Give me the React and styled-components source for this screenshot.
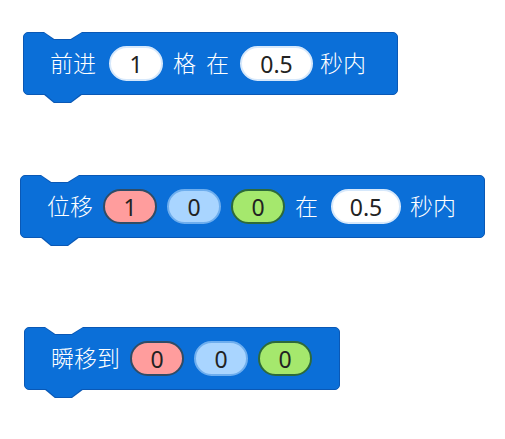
import React from 'react';
import styled, {createGlobalStyle} from 'styled-components';

const GlobalStyle = createGlobalStyle`
    html, body {
        margin: 0;
        padding: 0;
        background: #ffffff;
    }
    body {
        width: 505px;
        height: 439px;
        overflow: hidden;
        font-family: "Noto Sans", "Noto Sans CJK SC", sans-serif;
    }
`

const Canvas = styled.div`
    display: flex;
    flex-direction: column;
    align-items: flex-start;
    padding-top: 32px;
`

const Block = styled.div`
    position: relative;
    box-sizing: border-box;
    height: 63px;
    margin-left: ${p => p.$left}px;
    margin-top: ${p => p.$top || 0}px;
    padding: 0 ${p => p.$right || 30}px 0 26px;

    background: #0b6fd8;
    border: 1px solid #0a58b5;
    border-radius: 5px;

    display: flex;
    align-items: center;
    gap: 10px;

    /* notch cut into the top edge */
    &::before {
        content: '';
        position: absolute;
        top: -1px;
        left: 19px;
        width: 40px;
        height: 8px;
        background: #0a58b5;
        clip-path: polygon(0 0, 100% 0, 70% 100%, 27% 100%);
    }
    &::after {
        content: '';
        position: absolute;
        top: -1px;
        left: 20px;
        width: 38px;
        height: 7px;
        background: #ffffff;
        clip-path: polygon(0 0, 100% 0, 70% 100%, 27% 100%);
    }
`

const Tab = styled.div`
    position: absolute;
    bottom: -9px;
    left: 19px;
    width: 40px;
    height: 9px;
    background: #0a58b5;
    clip-path: polygon(0 0, 100% 0, 70% 100%, 27% 100%);

    &::after {
        content: '';
        position: absolute;
        top: -1px;
        left: 1px;
        width: 38px;
        height: 9px;
        background: #0b6fd8;
        clip-path: polygon(0 0, 100% 0, 70% 100%, 27% 100%);
    }
`

const Label = styled.span`
    color: #ffffff;
    font-size: 23px;
    font-weight: 300;
    line-height: 1;
    white-space: nowrap;
    margin-left: ${p => p.$ml || 0}px;
`

const pillColors = {
    white: {bg: '#ffffff', border: '#d6e8fb'},
    red: {bg: '#ff9d9d', border: '#2f4c66'},
    blue: {bg: '#a9d5ff', border: '#6eaeee'},
    green: {bg: '#a5e86d', border: '#2d6a3a'},
};

const Pill = styled.span`
    box-sizing: border-box;
    height: 35px;
    min-width: ${p => p.$w || 54}px;
    padding: 0 14px;
    border-radius: 18px;
    background: ${p => pillColors[p.$color].bg};
    border: 2px solid ${p => pillColors[p.$color].border};
    color: #222222;
    font-size: 23px;
    display: flex;
    align-items: center;
    justify-content: center;
    margin-left: ${p => p.$ml || 0}px;
`

const App = () => {
    return (
        <>
            <GlobalStyle />
            <Canvas>
                <Block $left={23} $right={31}>
                    <Label>前进</Label>
                    <Pill $color="white" $ml={3}>1</Pill>
                    <Label>格</Label>
                    <Label>在</Label>
                    <Pill $color="white" $w={73} $ml={1}>0.5</Pill>
                    <Label $ml={-3}>秒内</Label>
                    <Tab />
                </Block>

                <Block $left={20} $top={80} $right={28}>
                    <Label>位移</Label>
                    <Pill $color="red">1</Pill>
                    <Pill $color="blue">0</Pill>
                    <Pill $color="green">0</Pill>
                    <Label>在</Label>
                    <Pill $color="white" $w={70} $ml={3}>0.5</Pill>
                    <Label $ml={-1}>秒内</Label>
                    <Tab />
                </Block>

                <Block $left={24} $top={89} $right={27}>
                    <Label>瞬移到</Label>
                    <Pill $color="red">0</Pill>
                    <Pill $color="blue">0</Pill>
                    <Pill $color="green">0</Pill>
                    <Tab />
                </Block>
            </Canvas>
        </>
    );
};

export default App;
